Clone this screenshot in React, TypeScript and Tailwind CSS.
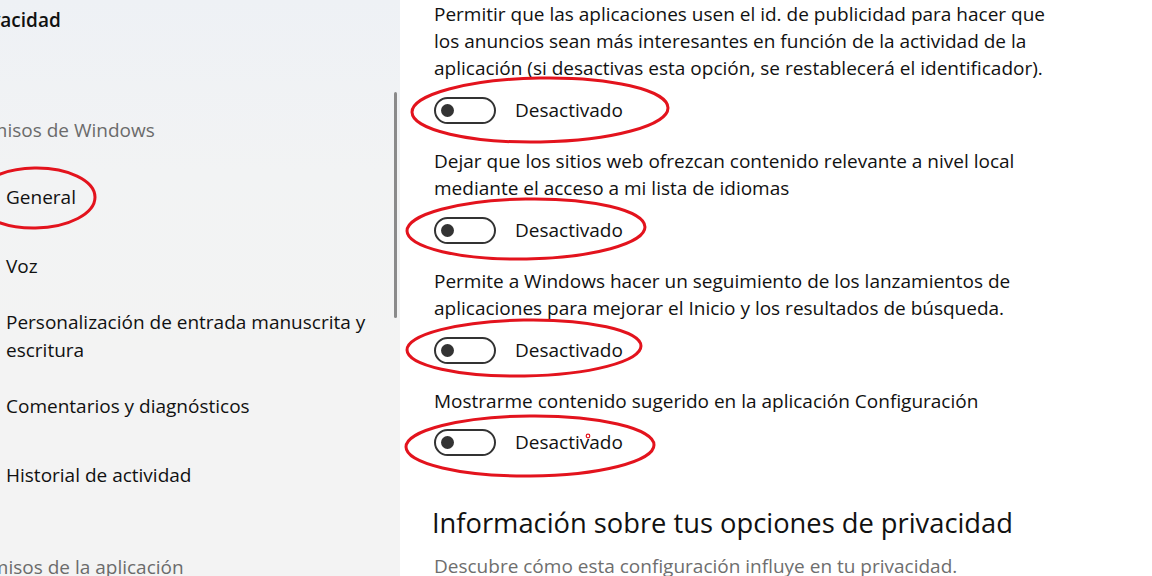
import React from "react";

function Toggle() {
  return (
    <div className="flex items-center h-[27px]">
      <div className="w-[62px] h-[27px] rounded-full border-2 border-[#333333] flex items-center pl-[5px] box-border">
        <div className="w-[13px] h-[13px] rounded-full bg-[#333333]" />
      </div>
      <span className="ml-[19px] text-[19px] leading-[27px] text-[#111111]">Desactivado</span>
    </div>
  );
}

function Lines({ lines }: { lines: string[] }) {
  return (
    <div className="text-[19px] leading-[27px] text-[#111111]">
      {lines.map((l, i) => (
        <div key={i} className="whitespace-nowrap">
          {l}
        </div>
      ))}
    </div>
  );
}

function NavItem({ children, tall }: { children: React.ReactNode; tall?: boolean }) {
  return (
    <div
      className={
        "flex items-center pl-[6px] text-[19px] leading-[28px] text-[#111111] " +
        (tall ? "h-[71px]" : "h-[69px]")
      }
    >
      <div>{children}</div>
    </div>
  );
}

export default function App() {
  return (
    <div
      className="relative w-[1152px] h-[576px] overflow-hidden flex bg-white"
      style={{ fontFamily: '"Open Sans", "Noto Sans", sans-serif' }}
    >
      {/* Sidebar */}
      <aside className="relative w-[400px] h-full shrink-0 overflow-hidden bg-[linear-gradient(180deg,#eef1f5_0%,#f2f3f4_30%,#f3f3f3_60%)]">
        <div className="pt-[6px]">
          <div className="-ml-[35px] text-[19px] leading-[28px] font-semibold text-[#111111] whitespace-nowrap">
            Privacidad
          </div>
          <div className="mt-[82px] -ml-[40px] text-[19px] leading-[28px] text-[#6b6b6b] whitespace-nowrap">
            Permisos de Windows
          </div>
          <div className="mt-[18px]">
            <NavItem>General</NavItem>
            <NavItem>Voz</NavItem>
            <NavItem tall>
              Personalización de entrada manuscrita y
              <br />
              escritura
            </NavItem>
            <NavItem>Comentarios y diagnósticos</NavItem>
            <NavItem>Historial de actividad</NavItem>
          </div>
          <div className="mt-[44px] -ml-[39px] text-[19px] leading-[28px] text-[#6b6b6b] whitespace-nowrap">
            Permisos de la aplicación
          </div>
        </div>
        {/* overlay scrollbar */}
        <div className="absolute left-[394px] top-[92px] w-[3px] h-[226px] rounded-full bg-[#8a8a8a]" />
      </aside>

      {/* Main content */}
      <main className="flex-1 h-full bg-white pl-[34px] pt-[1px]">
        <Lines
          lines={[
            "Permitir que las aplicaciones usen el id. de publicidad para hacer que",
            "los anuncios sean más interesantes en función de la actividad de la",
            "aplicación (si desactivas esta opción, se restablecerá el identificador).",
          ]}
        />
        <div className="mt-[14.5px]">
          <Toggle />
        </div>
        <div className="mt-[24.5px]">
          <Lines
            lines={[
              "Dejar que los sitios web ofrezcan contenido relevante a nivel local",
              "mediante el acceso a mi lista de idiomas",
            ]}
          />
        </div>
        <div className="mt-[14.5px]">
          <Toggle />
        </div>
        <div className="mt-[24.5px]">
          <Lines
            lines={[
              "Permite a Windows hacer un seguimiento de los lanzamientos de",
              "aplicaciones para mejorar el Inicio y los resultados de búsqueda.",
            ]}
          />
        </div>
        <div className="mt-[14.5px]">
          <Toggle />
        </div>
        <div className="mt-[24.5px]">
          <Lines lines={["Mostrarme contenido sugerido en la aplicación Configuración"]} />
        </div>
        <div className="mt-[14px]">
          <Toggle />
        </div>
        <div className="mt-[49px] -ml-[2px] text-[27.3px] leading-[36px] text-[#111111] whitespace-nowrap">
          Información sobre tus opciones de privacidad
        </div>
        <div className="mt-[12px] text-[19px] leading-[27px] text-[#6e6e6e] whitespace-nowrap">
          Descubre cómo esta configuración influye en tu privacidad.
        </div>
      </main>

      {/* Red hand-drawn annotations */}
      <svg
        className="absolute inset-0 pointer-events-none"
        width="1152"
        height="576"
        viewBox="0 0 1152 576"
        fill="none"
      >
        <g stroke="#e3131d" strokeWidth="3">
          <ellipse cx="35" cy="198" rx="60" ry="30" transform="rotate(-1 35 198)" />
          <ellipse cx="540" cy="110" rx="128" ry="32" transform="rotate(-1 540 110)" />
          <ellipse cx="526" cy="229" rx="119" ry="30" transform="rotate(-1 526 229)" />
          <ellipse cx="524" cy="348" rx="117" ry="28" transform="rotate(-1 524 348)" />
          <ellipse cx="530" cy="446" rx="124" ry="30" transform="rotate(-0.5 530 446)" />
        </g>
        <circle cx="588" cy="436" r="1.8" stroke="#e3131d" strokeWidth="1.2" />
      </svg>
    </div>
  );
}
